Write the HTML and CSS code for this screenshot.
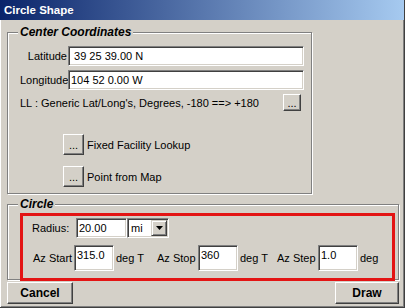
FILE: index.html
```html
<!DOCTYPE html>
<html>
<head>
<meta charset="utf-8">
<title>Circle Shape</title>
<link rel="stylesheet" href="styles.css">
</head>
<body>
<div class="window">
  <div class="titlebar">Circle Shape</div>
  <div class="client">
    <fieldset class="group center">
      <legend>Center Coordinates</legend>
      <div class="coords">
        <span class="lbl">Latitude</span><div class="field">&nbsp;39 25 39.00 N</div>
        <span class="lbl">Longitude</span><div class="field">104 52 0.00 W</div>
      </div>
      <div class="llrow">
        <span>LL : Generic Lat/Long's, Degrees, -180 ==&gt; +180</span>
        <button class="btn dots">...</button>
      </div>
      <div class="action first">
        <button class="btn dots big">...</button>
        <span>Fixed Facility Lookup</span>
      </div>
      <div class="action second">
        <button class="btn dots big">...</button>
        <span>Point from Map</span>
      </div>
    </fieldset>
    <fieldset class="group circle">
      <legend>Circle</legend>
      <div class="row r1">
        <span class="rlbl">Radius:</span>
        <div class="field rad">20.00</div>
        <div class="select">
          <span class="seltext">mi</span>
          <span class="ddbtn"><svg width="7" height="4" viewBox="0 0 7 4"><path d="M0 0H7L3.5 4Z" fill="#000"/></svg></span>
        </div>
      </div>
      <div class="row r2">
        <span class="azlbl first">Az Start</span>
        <div class="field tall">315.0</div>
        <span class="unit u1">deg T</span>
        <span class="azlbl">Az Stop</span>
        <div class="field tall">360</div>
        <span class="unit u2">deg T</span>
        <span class="azlbl">Az Step</span>
        <div class="field tall">1.0</div>
        <span class="unit">deg</span>
      </div>
      <div class="annot"></div>
    </fieldset>
    <div class="buttons">
      <button class="btn cmd cancel">Cancel</button>
      <button class="btn cmd draw">Draw</button>
    </div>
  </div>
</div>
</body>
</html>
```
FILE: styles.css
```css
* { box-sizing: border-box; }
html, body { margin: 0; padding: 0; }
body {
  width: 405px;
  height: 308px;
  overflow: hidden;
  background: #D4D0C8;
  font-family: "Liberation Sans", Arial, sans-serif;
  font-size: 11px;
  color: #000;
}
.window {
  width: 405px;
  height: 308px;
  display: flex;
  flex-direction: column;
  background: #D4D0C8;
  border-right: 1px solid #404040;
  border-bottom: 1px solid #404040;
  box-shadow: inset -1px -1px 0 #808080;
}
.titlebar {
  height: 20px;
  flex: none;
  background: linear-gradient(to right, #0A246A, #A6CAF0);
  color: #fff;
  font-weight: bold;
  font-size: 11.5px;
  line-height: 20px;
  padding-left: 4px;
}
.client {
  flex: 1;
  padding: 5px 5px 0 6px;
  border-left: 1px solid #fff;
}
.group {
  margin: 0;
  min-width: 0;
  border: 1px solid #808080;
  box-shadow: inset 1px 1px 0 #fff, 1px 1px 0 #fff;
  padding: 7px 6px 6px 10px;
}
.group legend {
  padding: 0 2px;
  font-weight: bold;
  font-style: italic;
  font-size: 12px;
  line-height: 14px;
  background: #D4D0C8;
}
.center { width: 305px; }
.coords {
  display: grid;
  grid-template-columns: 47px 236px;
  column-gap: 1px;
  row-gap: 4px;
  margin-left: 2px;
}
.lbl { text-align: right; align-self: center; white-space: nowrap; }
.field {
  height: 20px;
  background: #fff;
  border: 1px solid;
  border-color: #808080 #fff #fff #808080;
  box-shadow: inset 1px 1px 0 #404040, inset -1px -1px 0 #D4D0C8;
  padding: 0 2px;
  line-height: 18px;
  white-space: nowrap;
  overflow: hidden;
}
.btn {
  font: inherit;
  color: #000;
  background: #D4D0C8;
  border: 1px solid;
  border-color: #fff #404040 #404040 #fff;
  box-shadow: inset -1px -1px 0 #808080;
  padding: 0;
  margin: 0;
}
.llrow {
  display: flex;
  align-items: center;
  margin: 4px 4px 0 2px;
  white-space: nowrap;
}
.llrow .dots { margin-left: auto; }
.dots { width: 18px; height: 17px; line-height: 14px; }
.big { width: 21px; height: 21px; line-height: 16px; }
.action {
  display: flex;
  align-items: center;
  gap: 3px;
  margin-left: 45px;
}
.action.first { margin-top: 23px; }
.action.second { margin-top: 11px; }
.circle {
  width: 392px;
  margin-top: 3px;
  position: relative;
  padding: 7px 4px 8px 10px;
}
.row {
  display: flex;
  align-items: center;
  margin-left: 14px;
  white-space: nowrap;
}
.r1 { height: 20px; }
.r2 { margin-top: 7px; height: 26px; }
.rlbl { width: 44px; }
.rad { width: 51px; }
.select {
  width: 42px;
  height: 20px;
  display: flex;
  align-items: center;
  background: #fff;
  border: 1px solid;
  border-color: #808080 #fff #fff #808080;
  box-shadow: inset 1px 1px 0 #404040, inset -1px -1px 0 #D4D0C8;
  padding: 1px 1px 1px 3px;
}
.seltext { flex: 1; }
.ddbtn {
  width: 16px;
  height: 16px;
  display: flex;
  align-items: center;
  justify-content: center;
  background: #D4D0C8;
  border: 1px solid;
  border-color: #D4D0C8 #404040 #404040 #D4D0C8;
  box-shadow: inset 1px 1px 0 #fff, inset -1px -1px 0 #808080;
}
.azlbl { width: 41px; }
.azlbl.first { width: 42px; padding-left: 1px; }
.tall {
  width: 40px;
  height: 26px;
  line-height: 14px;
  padding-top: 2px;
}
.unit { padding-left: 2px; }
.u1 { width: 43px; }
.u2 { width: 39px; }
.annot {
  position: absolute;
  left: 12px;
  top: 2px;
  width: 375px;
  height: 68px;
  border: 3px solid #E31414;
  pointer-events: none;
}
.buttons {
  display: flex;
  justify-content: space-between;
  margin-top: 2px;
  width: 392px;
}
.cmd {
  height: 22px;
  font-weight: bold;
  font-size: 12px;
}
.cancel { width: 66px; }
.draw { width: 64px; }
```
